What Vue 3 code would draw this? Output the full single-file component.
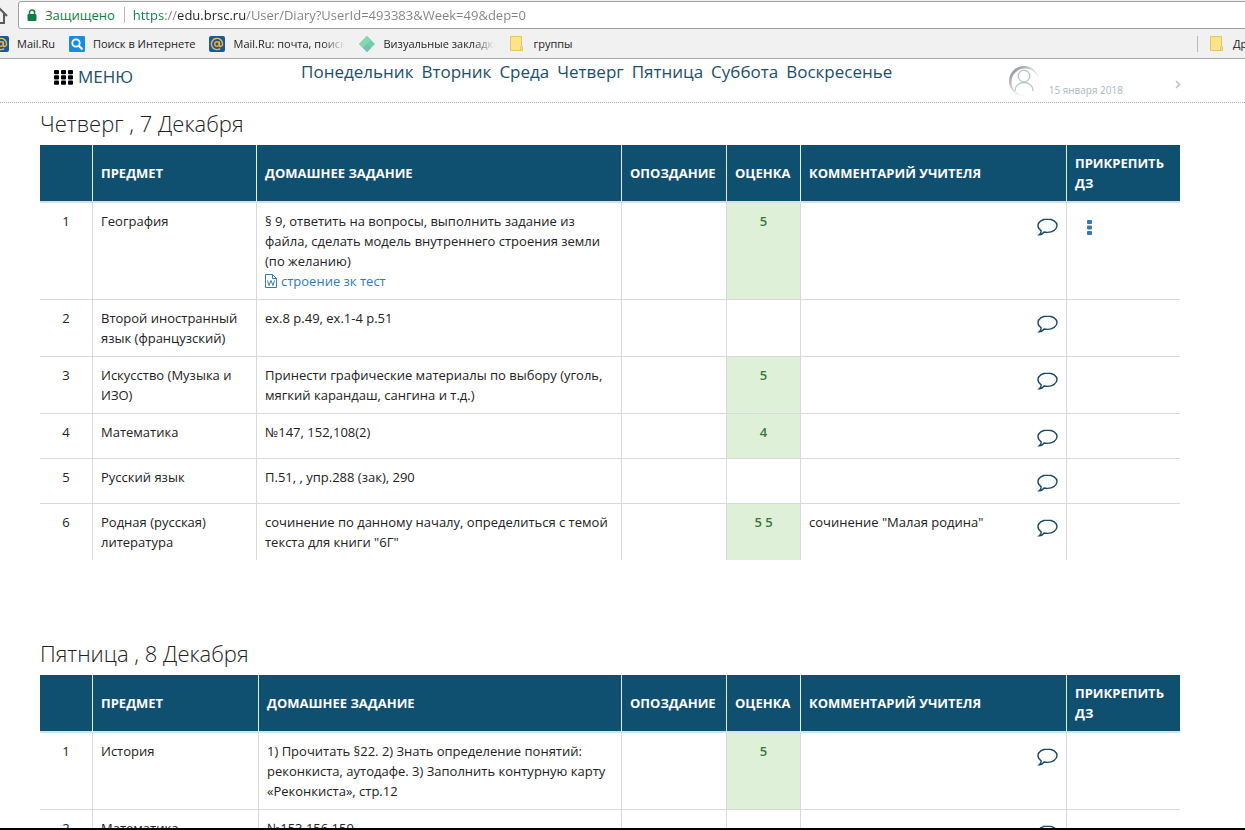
<script setup>
const address = 'https://edu.brsc.ru/User/Diary?UserId=493383&Week=49&dep=0'

const bookmarks = [
  { icon: 'mail', label: 'Mail.Ru', kind: 'first' },
  { icon: 'search', label: 'Поиск в Интернете' },
  { icon: 'mail', label: 'Mail.Ru: почта, поиск', kind: 'faded' },
  { icon: 'diamond', label: 'Визуальные закладки', kind: 'faded' },
  { icon: 'folder', label: 'группы' }
]

const weekdays = ['Понедельник', 'Вторник', 'Среда', 'Четверг', 'Пятница', 'Суббота', 'Воскресенье']

const days = [
  {
    id: 'thursday',
    title: 'Четверг , 7 Декабря',
    lessons: [
      {
        subject: 'География',
        task: '§ 9, ответить на вопросы, выполнить задание из файла, сделать модель внутреннего строения земли (по желанию)',
        file: 'строение зк тест',
        mark: '5',
        attach: true
      },
      { subject: 'Второй иностранный язык (французский)', task: 'ex.8 p.49, ex.1-4 p.51' },
      { subject: 'Искусство (Музыка и ИЗО)', task: 'Принести графические материалы по выбору (уголь, мягкий карандаш, сангина и т.д.)', mark: '5' },
      { subject: 'Математика', task: '№147, 152,108(2)', mark: '4' },
      { subject: 'Русский язык', task: 'П.51, , упр.288 (зак), 290' },
      {
        subject: 'Родная (русская) литература',
        task: 'сочинение по данному началу, определиться с темой текста для книги "6Г"',
        mark: '5 5',
        comment: 'сочинение "Малая родина"'
      }
    ]
  },
  {
    id: 'friday',
    title: 'Пятница , 8 Декабря',
    lessons: [
      {
        subject: 'История',
        task: '1) Прочитать §22. 2) Знать определение понятий: реконкиста, аутодафе. 3) Заполнить контурную карту «Реконкиста», стр.12',
        mark: '5'
      },
      { subject: 'Математика', task: '№153,156,159' }
    ]
  }
]
</script>

<template>
  <div class="window">
    <header class="browser">
      <div class="toolbar">
        <button class="home" type="button" aria-label="Домой">
          <svg width="18" height="20" viewBox="0 0 18 20" fill="none" stroke="#5a5a5a" stroke-width="2">
            <path d="M1 11 9 3l8 8M4 9v9h10V9" />
          </svg>
        </button>
        <div class="omnibox">
          <svg width="10" height="13" viewBox="0 0 10 13">
            <path d="M2.5 6V3.5a2.5 2.5 0 0 1 5 0V6" fill="none" stroke="#0b8043" stroke-width="1.5" />
            <rect x="0.5" y="5" width="9" height="7" rx="1" fill="#0b8043" />
          </svg>
          <label class="secure" for="address">Защищено</label>
          <input id="address" class="address" type="text" :value="address" spellcheck="false" />
        </div>
      </div>
      <nav class="bookmarks">
        <a v-for="item in bookmarks" :key="item.label" href="#" class="bookmark" :class="item.kind">
          <svg v-if="item.icon === 'mail'" width="16" height="16" viewBox="0 0 16 16">
            <rect width="16" height="16" rx="2" fill="#175a9c" />
            <circle cx="8" cy="8" r="2.3" fill="none" stroke="#f5a623" stroke-width="1.5" />
            <path d="M10.4 5.5v3.8c0 2 3.2 1.4 3.2-1.3A5.6 5.6 0 1 0 11.2 12.6" fill="none" stroke="#f5b545" stroke-width="1.4" />
          </svg>
          <svg v-else-if="item.icon === 'search'" width="16" height="16" viewBox="0 0 16 16">
            <rect width="16" height="16" rx="1" fill="#168de2" />
            <circle cx="7" cy="7" r="3.7" fill="none" stroke="#fff" stroke-width="1.8" />
            <path d="m9.8 9.8 3.7 3.7" stroke="#fff" stroke-width="2.2" />
          </svg>
          <svg v-else-if="item.icon === 'diamond'" width="16" height="16" viewBox="0 0 16 16">
            <path d="M8 0 16 8 8 16 0 8Z" fill="#72cfa5" />
            <path d="M8 0 12 4 4 12 0 8Z" fill="#85d8ae" />
            <path d="M4 12 8 8 12 12 8 16Z" fill="#70c4b4" />
          </svg>
          <svg v-else width="16" height="15" viewBox="0 0 16 15">
            <path d="M1.500.5h11v9.500l1 1v3.500h-12Z" fill="#fde48b" stroke="#e6c45e" />
            <path d="M11.500 14v-3.500" stroke="#e6c45e" />
          </svg>
          <span>{{ item.label }}</span>
        </a>
        <a href="#" class="bookmark others">
          <svg width="16" height="15" viewBox="0 0 16 15">
            <path d="M1.500.5h11v9.500l1 1v3.500h-12Z" fill="#fde48b" stroke="#e6c45e" />
            <path d="M11.500 14v-3.500" stroke="#e6c45e" />
          </svg>
          <span>Другие</span>
        </a>
      </nav>
    </header>

    <div class="site-bar">
      <button class="menu" type="button">
        <svg width="19" height="15" viewBox="0 0 19 15">
          <template v-for="row in 3" :key="row">
            <rect v-for="col in 3" :key="col" :x="(col - 1) * 7" :y="(row - 1) * 5.3" width="5" height="4.2" rx="1" fill="#000" />
          </template>
        </svg>
        <span>МЕНЮ</span>
      </button>
      <nav class="weekdays">
        <a v-for="name in weekdays" :key="name" href="#">{{ name }}</a>
      </nav>
      <div class="account">
        <svg width="32" height="32" viewBox="0 0 32 32" fill="none">
          <defs>
            <linearGradient id="ring" x1="0.1" y1="0.1" x2="0.8" y2="0.8">
              <stop offset="0" stop-color="#8d9292" />
              <stop offset="0.5" stop-color="#d3d7d7" />
              <stop offset="1" stop-color="#ffffff" />
            </linearGradient>
          </defs>
          <circle cx="16" cy="16" r="15" fill="url(#ring)" />
          <circle cx="17" cy="17" r="13.5" fill="#fff" />
          <circle cx="16" cy="11" r="5.8" stroke="#b5c6c9" stroke-width="1.3" />
          <path d="M7 26c0-5 3.5-8.500 9-8.500s9 3.500 9 8.500" stroke="#b5c6c9" stroke-width="1.3" />
        </svg>
        <time datetime="2018-01-15">15 января 2018</time>
        <button class="next" type="button" aria-label="Далее">
          <svg width="6" height="9" viewBox="0 0 6 9" fill="none" stroke="#b3c3cc" stroke-width="1.5">
            <path d="m1 1 3.500 3.500L1 8" />
          </svg>
        </button>
      </div>
    </div>

    <main class="diary">
      <section v-for="day in days" :key="day.id" class="day">
        <h2>{{ day.title }}</h2>
        <table :class="day.id">
          <colgroup>
            <col class="c-number" />
            <col class="c-subject" />
            <col />
            <col class="c-late" />
            <col class="c-mark" />
            <col class="c-comment" />
            <col class="c-attach" />
          </colgroup>
          <thead>
            <tr>
              <th></th>
              <th>ПРЕДМЕТ</th>
              <th>ДОМАШНЕЕ ЗАДАНИЕ</th>
              <th>ОПОЗДАНИЕ</th>
              <th>ОЦЕНКА</th>
              <th>КОММЕНТАРИЙ УЧИТЕЛЯ</th>
              <th>ПРИКРЕПИТЬ ДЗ</th>
            </tr>
          </thead>
          <tbody>
            <tr v-for="(lesson, index) in day.lessons" :key="lesson.subject">
              <td class="number">{{ index + 1 }}</td>
              <td>{{ lesson.subject }}</td>
              <td>
                {{ lesson.task }}
                <a v-if="lesson.file" href="#" class="file">
                  <svg width="12" height="14" viewBox="0 0 12 14" fill="none" stroke="#337ab7">
                    <path d="M.5.5h7l4 4v9H.5ZM7.5.5v4h4" />
                    <path d="m2.500 6.500 1.500 5 2-5 2 5 1.500-5" />
                  </svg>
                  <span>{{ lesson.file }}</span>
                </a>
              </td>
              <td></td>
              <td class="mark" :class="{ graded: lesson.mark }">{{ lesson.mark }}</td>
              <td>
                <div class="comment">
                  <span>{{ lesson.comment }}</span>
                  <button type="button" aria-label="Комментарий">
                    <svg width="21" height="18" viewBox="0 0 21 18" fill="none" stroke="#1b4a66" stroke-width="1.4">
                      <path d="M10.500 1C5.200 1 1 3.800 1 7.600c0 2.300 1.300 4 3.200 5.200.1 1.500-.5 2.700-1.900 3.900 2.200-.2 3.700-1 4.800-2.700 1.100.3 2.200.4 3.400.4 5.300 0 9.500-3.100 9.500-6.800S15.800 1 10.500 1Z" />
                    </svg>
                  </button>
                </div>
              </td>
              <td>
                <button v-if="lesson.attach" class="attach" type="button" aria-label="Прикрепить">
                  <svg width="5" height="16" viewBox="0 0 5 16" fill="#337ab7">
                    <rect width="5" height="4" rx="1" />
                    <rect y="5.5" width="5" height="4" rx="1" />
                    <rect y="11" width="5" height="4" rx="1" />
                  </svg>
                </button>
              </td>
            </tr>
          </tbody>
        </table>
      </section>
    </main>
    <footer class="edge"></footer>
  </div>
</template>

<style>
body {
  background: #fff;
}
</style>

<style scoped>
.window {
  display: flex;
  flex-direction: column;
  height: 100vh;
  overflow: hidden;
  background: #fff;
  font-family: "Open Sans", "Noto Sans", sans-serif;
  font-size: 13px;
  line-height: 20px;
  color: #222;
}

button {
  border: 0;
  padding: 0;
  background: none;
  font: inherit;
  color: inherit;
}

a {
  text-decoration: none;
}

svg {
  display: block;
  flex: none;
}

.browser {
  flex: none;
  background: #f1f1f1;
  border-bottom: 1px solid #a9a9a9;
}

.toolbar {
  display: flex;
  align-items: center;
  padding-top: 1px;
}

.home {
  margin-left: -10px;
  margin-right: 10px;
}

.omnibox {
  flex: 1;
  display: flex;
  align-items: center;
  height: 26px;
  margin-right: -4px;
  padding-left: 8px;
  border: 1px solid #a0a0a0;
  border-radius: 3px;
  background: #fff;
}

.secure {
  margin-left: 8px;
  padding-right: 9px;
  border-right: 1px solid #b8b8b8;
  line-height: 16px;
  color: #0b8043;
}

.address {
  flex: 1;
  margin: 0;
  padding: 0 0 0 8px;
  border: 0;
  outline: 0;
  font: inherit;
  -webkit-text-fill-color: transparent;
  background: linear-gradient(to right, #0b8043 40px, #808080 40px 53px, #222 53px 121px, #808080 121px);
  -webkit-background-clip: text;
  background-clip: text;
}

.bookmarks {
  display: flex;
  align-items: center;
  height: 29px;
  font-size: 11px;
}

.bookmark {
  display: flex;
  align-items: center;
  margin-right: 14px;
  gap: 8px;
  color: #222;
  white-space: nowrap;
}

.bookmark.first {
  margin-left: -7px;
}

.faded span {
  width: 112px;
  overflow: hidden;
  -webkit-mask-image: linear-gradient(to right, #000 80%, transparent);
  mask-image: linear-gradient(to right, #000 80%, transparent);
}

.bookmark.others {
  width: 48px;
  margin-left: auto;
  margin-right: 0;
  padding-left: 11px;
  box-sizing: border-box;
  border-left: 1px solid #b8b8b8;
  line-height: 16px;
}

.site-bar {
  flex: none;
  display: flex;
  height: 43px;
  padding: 0 64px 0 54px;
  border-bottom: 1px dotted #b5b5b5;
}

.menu {
  display: flex;
  align-items: center;
  gap: 5px;
  height: 36px;
  font-size: 17px;
  color: #1b4f6b;
}

.weekdays {
  display: flex;
  gap: 8px;
  margin-left: 168px;
  font-size: 17px;
  line-height: 26px;
}

.weekdays a {
  color: #1b4f6b;
}

.account {
  display: flex;
  align-items: center;
  margin-left: auto;
  font-size: 10px;
  color: #a9b9bf;
}

.account time {
  padding-top: 18px;
  margin-left: 9px;
}

.next {
  margin-top: 8px;
  margin-left: 52px;
}

.diary {
  flex: 1;
  min-height: 0;
  overflow: hidden;
  padding: 0 65px 0 40px;
}

.day {
  margin-bottom: 73px;
}

h2 {
  margin: 0;
  padding: 4px 0 5px;
  font-size: 22px;
  font-weight: 300;
  line-height: 33px;
}

table {
  width: 100%;
  table-layout: fixed;
  border-collapse: separate;
  border-spacing: 0;
}

.c-number {
  width: 52px;
}

.c-subject {
  width: 164px;
}

.friday .c-subject {
  width: 166px;
}

.c-late {
  width: 105px;
}

.c-mark {
  width: 74px;
}

.c-comment {
  width: 266px;
}

.c-attach {
  width: 114px;
}

th,
td {
  padding: 8px;
  border-left: 1px solid #d9d9d9;
  border-bottom: 1px solid #d9d9d9;
  text-align: left;
}

th:first-child,
td:first-child {
  border-left: 0;
}

th {
  background: #0f4f70;
  border-left-color: #e3eef3;
  border-bottom: 2px solid #d5e1ea;
  color: #fff;
  font-weight: 700;
}

td {
  vertical-align: top;
}

tbody tr:last-child td {
  border-bottom: 0;
}

td.number,
td.mark {
  text-align: center;
}

.mark {
  color: #3c763d;
  font-weight: 600;
}

.graded {
  background: #dff0d8;
}

.file {
  display: flex;
  align-items: center;
  gap: 4px;
  color: #337ab7;
}

.comment {
  display: flex;
  justify-content: space-between;
}

.comment button {
  display: flex;
  align-items: flex-start;
  padding-top: 7px;
  height: 28px;
}

.attach {
  padding: 9px 0 0 12px;
}

.edge {
  flex: none;
  height: 2px;
  background: #000;
}
</style>
